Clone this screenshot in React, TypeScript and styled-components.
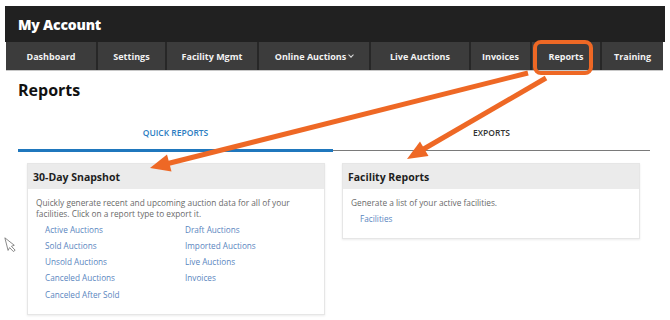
import React from "react";
import styled, { createGlobalStyle } from "styled-components";

const Global = createGlobalStyle`
  html, body { margin: 0; padding: 0; background: #fff; }
  body { font-family: "Open Sans", "Liberation Sans", sans-serif; }
  * { box-sizing: border-box; }
`;

const Page = styled.div`
  position: relative;
  width: 670px;
  height: 320px;
  padding-top: 6px;
  overflow: hidden;
`;

const TopBar = styled.div`
  margin-left: 5px;
  width: 660px;
  height: 36px;
  background: #212121;
  display: flex;
  align-items: center;
  padding-left: 13px;
`;

const Brand = styled.div`
  color: #fff;
  font-weight: 800;
  font-size: 14px;
  letter-spacing: -0.2px;
`;

const Nav = styled.nav`
  margin-left: 6px;
  width: 657px;
  height: 29px;
  display: flex;
  background: #3c3c3c;
  border-bottom: 1px solid #c8c8c8;
`;

const NavItem = styled.div<{ $w: number }>`
  width: ${(p) => p.$w}px;
  flex: none;
  display: flex;
  align-items: center;
  justify-content: center;
  color: #f2f2f2;
  font-weight: 700;
  font-size: 9px;
  border-left: 2px solid #272727;
  &:first-child { border-left: none; }
`;

const Caret = styled.span`
  display: inline-block;
  width: 4px;
  height: 4px;
  border-right: 1px solid #ddd;
  border-bottom: 1px solid #ddd;
  transform: rotate(45deg);
  margin-left: 3px;
  margin-top: -3px;
`;

const Title = styled.h1`
  margin: 9px 0 0 18px;
  font-size: 16px;
  font-weight: 700;
  color: #111;
  line-height: 20px;
`;

const Tabs = styled.div`
  margin: 27px 0 0 18px;
  width: 632px;
  display: flex;
`;

const Tab = styled.div<{ $active?: boolean; $w: number }>`
  width: ${(p) => p.$w}px;
  text-align: center;
  font-size: 8.5px;
  font-weight: 600;
  line-height: 12px;
  color: ${(p) => (p.$active ? "#2b7cc1" : "#333")};
  border-bottom: ${(p) => (p.$active ? "3px solid #1f77bd" : "1px solid #7a7a7a")};
  height: ${(p) => (p.$active ? 25 : 24)}px;
  align-self: flex-start;
`;

const Cards = styled.div`
  margin: 11px 0 0 27px;
  display: flex;
  gap: 17px;
  align-items: flex-start;
`;

const Card = styled.div`
  width: 298px;
  border: 1px solid #e6e6e6;
  box-shadow: 0 1px 2px rgba(0, 0, 0, 0.08);
  background: #fff;
`;

const CardHead = styled.div`
  height: 25px;
  background: #ebebeb;
  display: flex;
  align-items: center;
  padding-left: 5px;
  font-size: 10.5px;
  font-weight: 700;
  color: #1e1e1e;
`;

const CardBody = styled.div`
  padding: 8px 8px 12px 8px;
`;

const Desc = styled.p`
  margin: 0;
  font-size: 8.3px;
  line-height: 11px;
  color: #6a6a6a;
`;

const LinkGrid = styled.div`
  margin-top: 2px;
  padding-left: 9px;
  display: grid;
  grid-template-columns: 140px 1fr;
  grid-auto-flow: column;
  grid-template-rows: repeat(5, 16.3px);
`;

const LinkList = styled.div`
  margin-top: 2px;
  padding-left: 9px;
`;

const ReportLink = styled.a`
  display: flex;
  align-items: center;
  height: 16px;
  font-size: 8.2px;
  color: #5a86c0;
  text-decoration: none;
`;

const Overlay = styled.svg`
  position: absolute;
  left: 0;
  top: 0;
  pointer-events: none;
`;

const navItems: [string, number][] = [
  ["Dashboard", 90],
  ["Settings", 69],
  ["Facility Mgmt", 92],
  ["Online Auctions", 112],
  ["Live Auctions", 100],
  ["Invoices", 61],
  ["Reports", 70],
  ["Training", 63],
];

const col1 = ["Active Auctions", "Sold Auctions", "Unsold Auctions", "Canceled Auctions", "Canceled After Sold"];
const col2 = ["Draft Auctions", "Imported Auctions", "Live Auctions", "Invoices"];

export default function App() {
  return (
    <Page>
      <Global />
      <TopBar>
        <Brand>My Account</Brand>
      </TopBar>
      <Nav>
        {navItems.map(([label, w]) => (
          <NavItem key={label} $w={w}>
            {label}
            {label === "Online Auctions" && <Caret />}
          </NavItem>
        ))}
      </Nav>
      <Title>Reports</Title>
      <Tabs>
        <Tab $active $w={315}>QUICK REPORTS</Tab>
        <Tab $w={317}>EXPORTS</Tab>
      </Tabs>
      <Cards>
        <Card>
          <CardHead>30-Day Snapshot</CardHead>
          <CardBody>
            <Desc>
              Quickly generate recent and upcoming auction data for all of your
              <br />
              facilities. Click on a report type to export it.
            </Desc>
            <LinkGrid>
              {col1.map((l) => (
                <ReportLink key={l}>{l}</ReportLink>
              ))}
              {col2.map((l) => (
                <ReportLink key={l}>{l}</ReportLink>
              ))}
            </LinkGrid>
          </CardBody>
        </Card>
        <Card>
          <CardHead>Facility Reports</CardHead>
          <CardBody>
            <Desc>Generate a list of your active facilities.</Desc>
            <LinkList>
              <ReportLink>Facilities</ReportLink>
            </LinkList>
          </CardBody>
        </Card>
      </Cards>
      <Overlay width="670" height="320" viewBox="0 0 670 320">
        <rect x="535" y="42" width="56" height="31" rx="6" fill="none" stroke="#ee6825" strokeWidth="4" />
        <line x1="528" y1="73" x2="168" y2="163.5" stroke="#ee6825" strokeWidth="5" />
        <polygon points="150,168 171.5,171.5 167,154.5" fill="#ee6825" />
        <line x1="546" y1="78" x2="422" y2="150" stroke="#ee6825" strokeWidth="5" />
        <polygon points="407,159 428.5,156 420,141.5" fill="#ee6825" />
        <path d="M6 237 L14 246 L11 246.5 L14 251 L12 252 L9 247.5 L7 250 Z" fill="none" stroke="#777" strokeWidth="0.8" transform="rotate(-10 10 244)" />
      </Overlay>
    </Page>
  );
}
